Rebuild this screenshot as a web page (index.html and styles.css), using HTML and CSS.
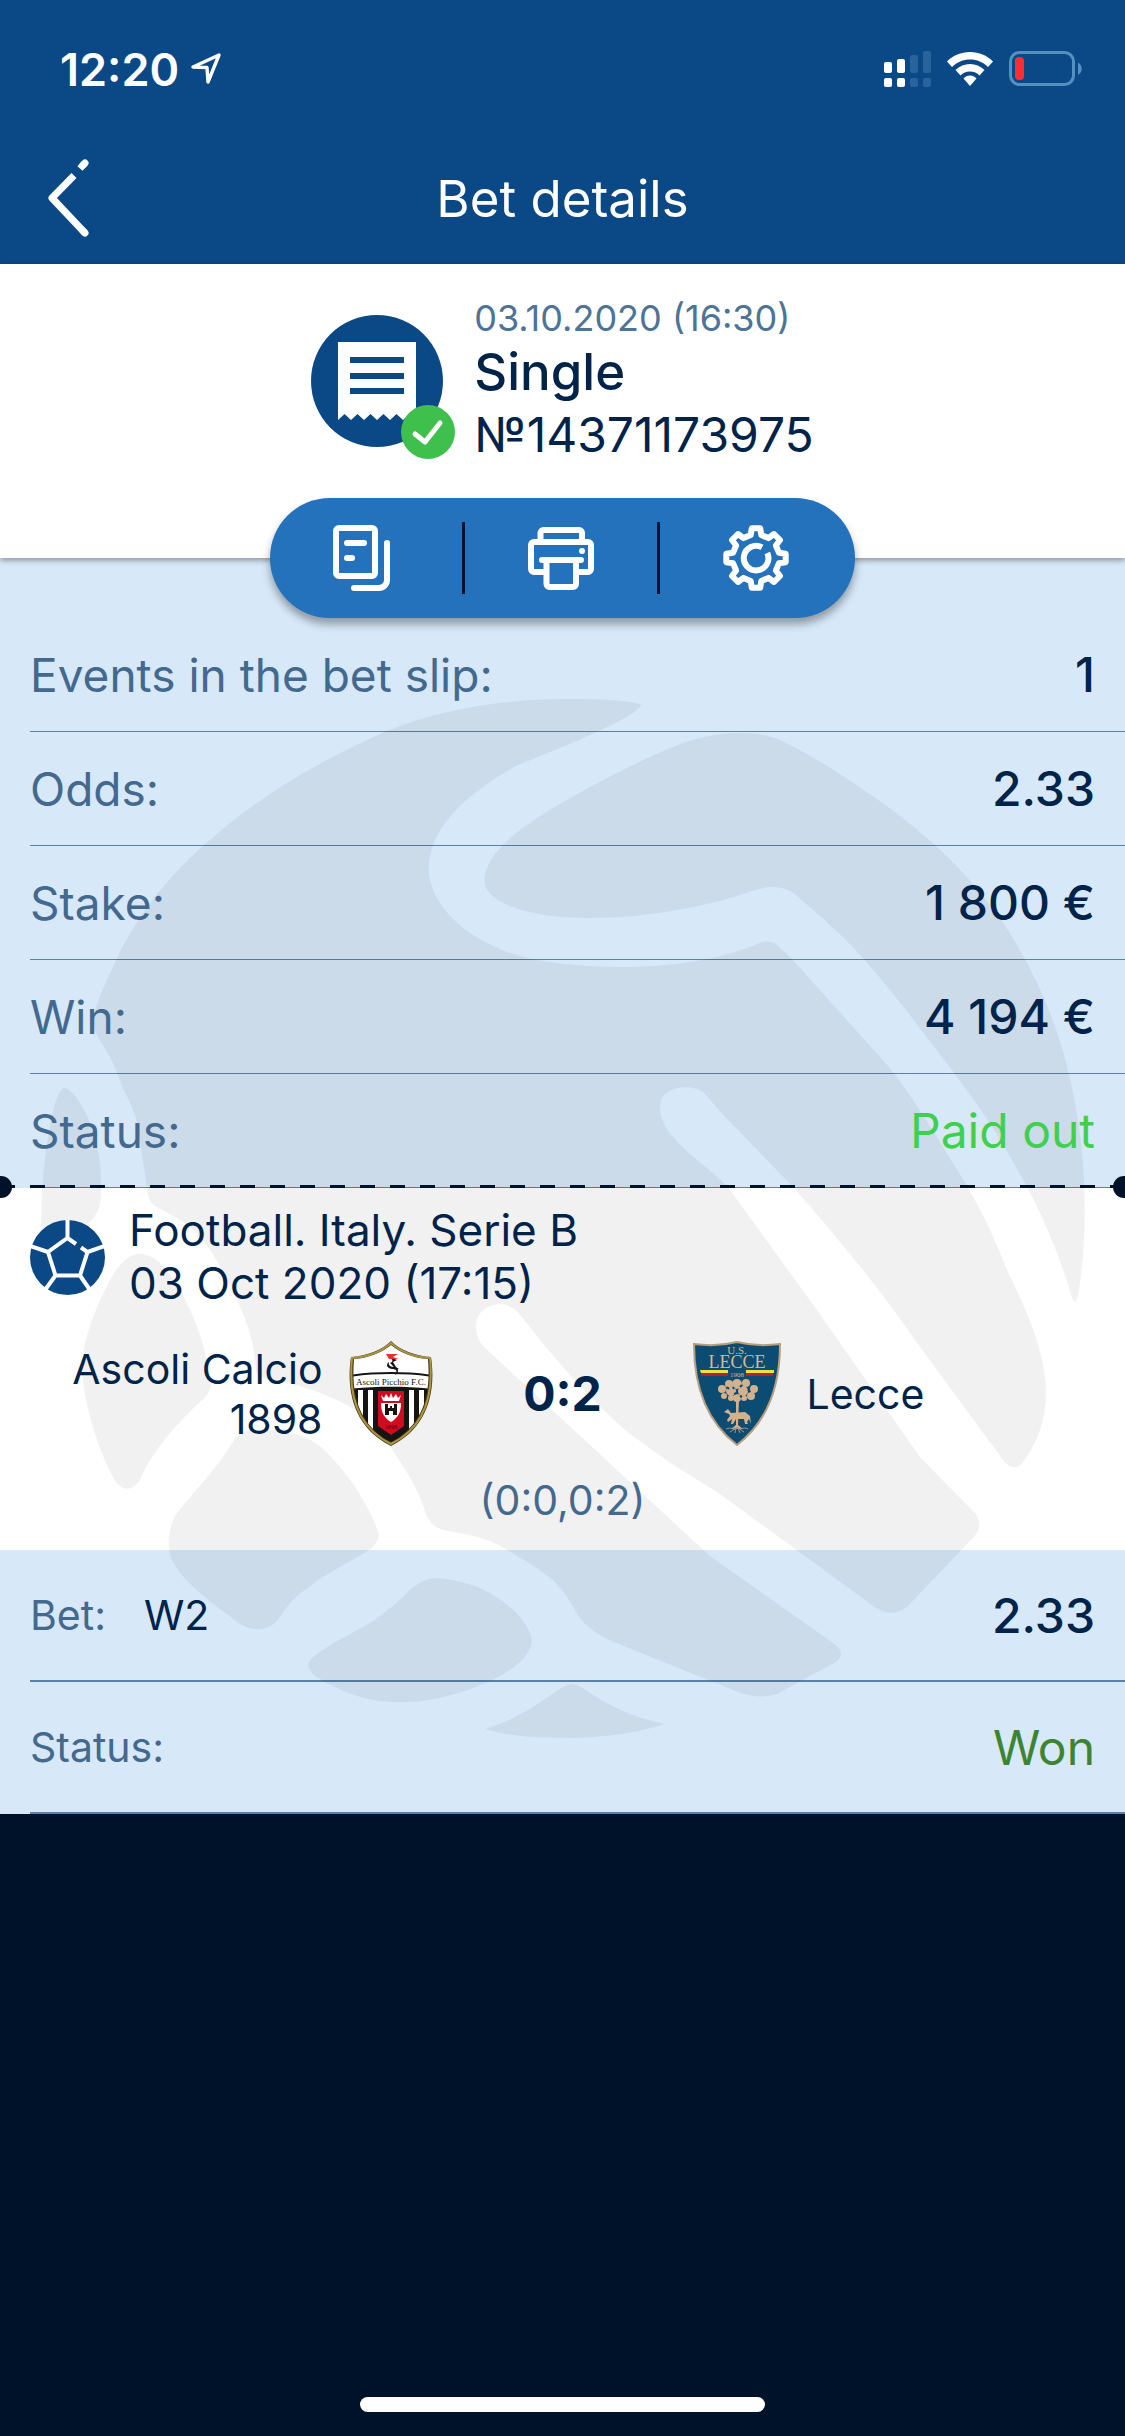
FILE: index.html
```html
<!DOCTYPE html>
<html lang="en">
<head>
    <meta charset="UTF-8">
    <meta name="viewport" content="width=device-width, initial-scale=1.0">
    <title>Bet details</title>
    <link rel="stylesheet" href="styles.css">
</head>
<body>
    <header class="header">
        <div class="status-bar">
            <div class="status-left">
                <span class="time">12:20</span>
                <svg class="location" width="30" height="32" viewBox="0 0 30 32">
                    <path d="M2 14 L28 2 L17 29 L16 14.5 Z" fill="none" stroke="#fff" stroke-width="3.4" stroke-linejoin="round"/>
                </svg>
            </div>
            <div class="status-right">
                <svg width="47" height="36" viewBox="0 0 47 36">
                    <g fill="#fff">
                        <rect x="0" y="11" width="8" height="11" rx="2"/>
                        <rect x="13" y="8" width="8" height="14" rx="2"/>
                        <rect x="0" y="27" width="8" height="9" rx="2"/>
                        <rect x="13" y="27" width="8" height="9" rx="2"/>
                    </g>
                    <g fill="#28649b">
                        <rect x="26" y="4" width="8" height="18" rx="2"/>
                        <rect x="39" y="0" width="8" height="22" rx="2"/>
                        <rect x="26" y="27" width="8" height="9" rx="2"/>
                        <rect x="39" y="27" width="8" height="9" rx="2"/>
                    </g>
                </svg>
                <svg width="46" height="34" viewBox="0 0 46 34">
                    <path d="M23 0 C32 0 40 3.500 46 9.500 L41 15 C36 10 30 7.500 23 7.500 C16 7.500 10 10 5 15 L0 9.500 C6 3.500 14 0 23 0 Z" fill="#fff"/>
                    <path d="M23 12 C28.500 12 33.500 14 37.500 18 L32.500 23.500 C30 21 27 19.500 23 19.500 C19 19.500 16 21 13.500 23.500 L8.500 18 C12.500 14 17.500 12 23 12 Z" fill="#fff"/>
                    <path d="M23 23.500 C25.500 23.500 27.800 24.500 29.500 26.500 L23 34 L16.500 26.500 C18.200 24.500 20.500 23.500 23 23.500 Z" fill="#fff"/>
                </svg>
                <svg width="73" height="36" viewBox="0 0 73 36">
                    <rect x="1.500" y="1.500" width="63" height="32" rx="9" fill="none" stroke="#5590c0" stroke-width="3"/>
                    <rect x="6" y="6" width="9" height="23" rx="4" fill="#ff2d2f"/>
                    <path d="M69 11.500 C74 14 74 21.500 69 24 Z" fill="#5590c0"/>
                </svg>
            </div>
        </div>
        <div class="nav-bar">
            <button class="back-btn" aria-label="Back">
                <svg width="42" height="78" viewBox="0 0 42 78">
                    <path d="M37 4 L32 9.500 M26 16.500 L4 39 L37 74" fill="none" stroke="#fff" stroke-width="7" stroke-linejoin="round"/>
                    <path d="M37 4 L35 6 M37 74 L35 72" stroke="#fff" stroke-width="7" stroke-linecap="round"/>
                </svg>
            </button>
            <h1 class="title">Bet details</h1>
        </div>
    </header>

    <section class="summary">
        <div class="receipt">
            <svg width="132" height="132" viewBox="0 0 132 132">
                <circle cx="66" cy="66" r="66" fill="#0b4886"/>
                <path d="M27 27 H105 V105 L98.500 99 L92 105 L85.500 99 L79 105 L72.500 99 L66 105 L59.500 99 L53 105 L46.500 99 L40 105 L33.500 99 L27 105 Z" fill="#fff"/>
                <path d="M39 45 H93 M39 61 H93 M39 76 H93" stroke="#0b4886" stroke-width="6"/>
            </svg>
            <svg class="badge" width="54" height="54" viewBox="0 0 54 54">
                <circle cx="27" cy="27" r="27" fill="#3fbf4c"/>
                <path d="M14 29 L24 37 L39 18" fill="none" stroke="#fff" stroke-width="5" stroke-linecap="round" stroke-linejoin="round"/>
            </svg>
        </div>
        <div class="summary-text">
            <div class="date">03.10.2020 (16:30)</div>
            <div class="type">Single</div>
            <div class="number">№14371173975</div>
        </div>
    </section>

    <main class="slip">
        <!-- company mark behind the rows -->
        <svg class="watermark" viewBox="0 558 1125 1256" preserveAspectRatio="none" aria-hidden="true">
            <path d="M642 705 C630 700 600 699 567 699 C500 699 440 710 387 731 C320 760 260 795 204 845 C165 880 138 915 118 956 C105 985 97 1000 93 1019 C93 1028 97 1035 100 1041 C110 1055 117 1070 122 1087 C132 1105 138 1120 140 1140 L147 1188 C148 1198 150 1204 157 1207 L178 1219 C195 1228 208 1245 218 1263 C235 1293 250 1325 254 1352 L256 1370 C257 1376 262 1378 268 1379 C300 1384 330 1395 352 1408 C368 1417 376 1428 383 1437 C400 1460 415 1483 424 1508 C428 1522 434 1528 444 1530 C465 1534 485 1537 502 1547 C530 1563 550 1575 560 1588 C575 1605 575 1617 590 1628 C602 1638 615 1642 631 1649 L738 1692 C752 1697 764 1698 777 1694 L836 1662 C842 1657 843 1651 836 1645 L710 1556 L482 1345 C472 1330 474 1313 490 1306 C503 1302 512 1305 520 1315 C540 1340 575 1385 624 1429 C650 1450 680 1470 717 1492 L876 1608 C888 1615 897 1614 907 1607 L970 1541 C979 1532 982 1526 976 1514 L920 1457 L812 1303 L728 1187 C710 1168 688 1155 674 1138 C662 1125 658 1111 661 1100 C668 1086 691 1084 703 1092 C715 1105 725 1118 740 1132 C755 1148 773 1166 793 1187 C840 1240 885 1296 920 1347 L1003 1460 C1010 1469 1017 1470 1023 1462 C1038 1442 1046 1419 1046 1393 C1046 1360 1034 1325 1007 1270 C990 1226 972 1192 951 1160 C930 1125 910 1094 889 1067 L793 960 L776 944 Q768 939 757 944 C720 960 670 967 618 967 C580 967 530 962 502 950 C455 930 429 899 429 869 C429 830 460 798 516 766 C550 752 605 731 633 713 Z"/>
            <path d="M739 733 C700 733 668 748 631 766 C590 786 535 816 510 838 C490 856 482 873 485 885 C490 905 535 918 588 918 C650 918 710 906 755 890 C775 884 788 888 797 896 C818 914 842 935 861 956 C888 986 910 1015 925 1035 C960 1080 990 1120 1012 1160 C1035 1200 1055 1240 1072 1298 Q1076 1308 1079 1290 C1087 1240 1086 1180 1080 1134 C1070 1060 1050 995 1004 924 C960 860 910 820 846 778 C825 764 805 752 782 741 C770 735 755 733 739 733 Z"/>
            <path d="M65 1088 C61 1088 57 1096 54 1106 C45 1145 41 1190 41 1225 Q44 1260 55 1252 L90 1222 C99 1212 101 1206 101 1190 C102 1165 98 1145 91 1125 C84 1106 72 1089 65 1088 Z"/>
            <path d="M140 1254 C128 1254 118 1265 110 1280 C92 1314 82 1345 82 1370 C84 1405 98 1450 115 1481 Q128 1497 140 1480 C150 1455 175 1425 200 1402 C211 1392 212 1388 210 1378 C206 1344 190 1300 165 1268 Q152 1253 140 1254 Z"/>
            <path d="M268 1430 C250 1429 241 1430 234 1440 C220 1465 195 1490 177 1513 C169 1525 167 1540 170 1555 C178 1580 215 1605 240 1624 Q262 1636 277 1621 C285 1610 292 1598 308 1588 C325 1573 355 1560 372 1548 Q382 1539 377 1529 C369 1505 348 1472 321 1447 C308 1436 290 1431 268 1430 Z"/>
            <path d="M434 1578 Q424 1579 412 1588 C390 1610 375 1621 352 1633 C336 1642 320 1650 311 1659 Q304 1667 315 1676 C340 1692 370 1703 400 1702 C430 1703 463 1693 488 1682 C512 1671 530 1658 532 1641 C531 1625 512 1605 488 1592 C472 1583 452 1579 434 1578 Z"/>
            <path d="M572 1684 Q566 1684 552 1694 C535 1706 515 1720 485 1729 C510 1737 540 1738 567 1738 C605 1738 640 1732 665 1724 C640 1719 617 1710 595 1696 Q577 1683 572 1684 Z"/>
        </svg>

        <div class="actions">
            <button class="action-btn" aria-label="Copy">
                <svg width="57" height="66" viewBox="0 0 57 66" class="line-icon">
                    <rect x="3" y="3" width="39" height="48" rx="3"/>
                    <path d="M14 18 H31 M14 33 H19 M54 18 V55 A8 8 0 0 1 46 63 H21"/>
                </svg>
            </button>
            <button class="action-btn" aria-label="Print">
                <svg width="66" height="63" viewBox="0 0 66 63" class="line-icon">
                    <path d="M12.500 15 V6 A3 3 0 0 1 15.500 3 H51 A3 3 0 0 1 54 6 V15"/>
                    <path d="M16 45 H6 A3 3 0 0 1 3 42 V18 A3 3 0 0 1 6 15 H60 A3 3 0 0 1 63 18 V42 A3 3 0 0 1 60 45 H50"/>
                    <path d="M14 33 H53 M18.500 33 V57 A3 3 0 0 0 21.500 60 H45 A3 3 0 0 0 48 57 V33 M54 24 V24"/>
                </svg>
            </button>
            <button class="action-btn" aria-label="Settings">
                <svg width="66" height="66" viewBox="0 0 66 66" class="line-icon">
                    <path d="M28.800 3.300 H37.200 L38.300 10.100 L45.500 13.100 L51 9 L57 15 L52.900 20.500 L55.900 27.700 L62.700 28.800 V37.200 L55.900 38.300 L52.900 45.500 L57 51 L51 57 L45.500 52.900 L38.300 55.900 L37.200 62.700 H28.800 L27.700 55.900 L20.500 52.900 L15 57 L9 51 L13.100 45.500 L10.100 38.300 L3.300 37.200 V28.800 L10.100 27.700 L13.100 20.500 L9 15 L15 9 L20.500 13.100 L27.700 10.100 Z"/>
                    <path d="M44.300 28 A12.300 12.300 0 1 1 39 22.300" stroke-linecap="butt"/>
                </svg>
            </button>
        </div>

        <dl class="rows">
            <div class="row"><dt>Events in the bet slip:</dt><dd>1</dd></div>
            <div class="row"><dt>Odds:</dt><dd>2.33</dd></div>
            <div class="row"><dt>Stake:</dt><dd>1 800 €</dd></div>
            <div class="row"><dt>Win:</dt><dd>4 194 €</dd></div>
            <div class="row"><dt>Status:</dt><dd class="paid">Paid out</dd></div>
        </dl>
        <div class="tear-line"></div>

        <section class="match">
            <div class="league">
                <svg width="75" height="75" viewBox="0 0 75 75">
                    <circle cx="37.500" cy="37.500" r="37.500" fill="#0b4886"/>
                    <path d="M46 24 L37.500 18 L18 32 L25.500 55.500 H50 L57.500 32 L51 27.500 M37.500 18 V0 M57.500 32 L75 26 M50 55.500 L60 70 M25.500 55.500 L15 70 M18 32 L0 26" fill="none" stroke="#fff" stroke-width="4"/>
                </svg>
                <div>
                    <div>Football. Italy. Serie B</div>
                    <div>03 Oct 2020 (17:15)</div>
                </div>
            </div>
            <div class="teams">
                <div class="team home">
                    <span class="team-name">Ascoli Calcio 1898</span>
                    <svg width="84" height="105" viewBox="0 0 84 105">
                        <defs>
                            <clipPath id="ascoli"><path d="M42 4 C50 11 64 17 79 18 C82 52 75 84 42 101 C9 84 2 52 5 18 C20 17 34 11 42 4 Z"/></clipPath>
                        </defs>
                        <path d="M42 0 C51 9 66 15 82 16 C88 56 75 89 42 105 C9 89 -4 56 2 16 C18 15 33 9 42 0 Z" fill="#4a3d17"/>
                        <path d="M42 2 C51 10 65 16 81 17 C85 56 74 87 42 103 C10 87 -1 56 3 17 C19 16 33 10 42 2 Z" fill="none" stroke="#ac9440" stroke-width="2"/>
                        <g clip-path="url(#ascoli)">
                            <rect width="84" height="105" fill="#161412"/>
                            <path d="M0 0 H84 V34 C58 30 26 30 0 34 Z" fill="#fff"/>
                            <path d="M0 36 C26 32 58 32 84 36 V48 C58 45 26 45 0 48 Z" fill="#fff"/>
                            <path d="M9 49 h5 v50 h-5 z M19 49 h5 v50 h-5 z M60 49 h5 v50 h-5 z M70 49 h5 v50 h-5 z" fill="#fff"/>
                            <path d="M29 50 H55 V85 L42 94 L29 85 Z" fill="#d10a20"/>
                            <path d="M32 54 L35 57 L37 53 L40 57 L42 52 L44 57 L47 53 L49 57 L52 54 L50 60 H34 Z" fill="#fff"/>
                            <path d="M32 62 H52 C52 71 49 77 42 81 C35 77 32 71 32 62 Z" fill="#fff"/>
                            <path d="M36 63 h3 v4 h2 v-2 h2 v2 h2 v-4 h3 v11 h-4 v-4 h-4 v4 h-4 z" fill="#161412"/>
                            <text class="crest-text" x="42" y="88" font-size="6" fill="#4e0510">1898</text>
                        </g>
                        <path d="M41 16 L48 19 L44 21 L47 26 L50 28 C46 30 44 24 41 22 C46 20 42 18 41 16 M40 21 C39 25 42 26 46 26 C50 28 50 32 46 34 C49 30 47 28 43 28 C37 27 37 23 40 21 Z" fill="#161412"/>
                        <path d="M37 13 L49 13 L44 16 L50 18 L40 18 Z" fill="#e53034"/>
                        <text class="crest-text" x="42" y="44" font-size="9" fill="#111">Ascoli Picchio F.C.</text>
                    </svg>
                </div>
                <div class="score">0:2</div>
                <div class="team away">
                    <svg width="88" height="105" viewBox="0 0 88 105">
                        <path d="M1 3 C16 5 32 4 44 1 C56 4 72 5 87 3 C87 46 74 81 44 104 C14 81 1 46 1 3 Z" fill="#0c4c72" stroke="#b79f7d" stroke-width="2"/>
                        <g class="crest-text" fill="#d7b895">
                            <text x="44" y="13" font-size="11">U.S.</text>
                            <text x="44" y="27" font-size="18">LECCE</text>
                            <text x="44" y="36" font-size="7">1908</text>
                        </g>
                        <path d="M7 29 H35 V32 H8 Z M53 29 H81 V32 H53 Z" fill="#e5e63a"/>
                        <path d="M8 32 H35 V35 H9 Z M53 32 H80 V35 H53 Z" fill="#b51f35"/>
                        <g fill="#d2b18f">
                            <circle cx="44" cy="43" r="5"/><circle cx="36" cy="43" r="4"/><circle cx="53" cy="42" r="4"/>
                            <circle cx="29" cy="48" r="4"/><circle cx="61" cy="48" r="4"/><circle cx="38" cy="50" r="5"/>
                            <circle cx="50" cy="50" r="5"/><circle cx="31" cy="55" r="3"/><circle cx="58" cy="55" r="4"/>
                            <circle cx="44" cy="57" r="4"/><circle cx="38" cy="57" r="3"/><circle cx="51" cy="57" r="3"/>
                            <path d="M43 58 H46 L45 84 L50 88 H38 L43 84 Z"/>
                            <path d="M31 71 L35 68 L38 72 L52 71 L57 75 L58 83 L56 78 L54 81 L55 83 H52 L51 78 H43 L40 83 H38 L39 78 L35 81 L34 79 L37 75 L36 73 Z"/>
                        </g>
                        <path d="M33 88 C38 85 42 91 44 86 C46 91 50 85 55 88 M37 91 L43 87 L42 92 M51 91 L45 87 L47 92" fill="none" stroke="#a49480" stroke-width="1"/>
                        <path d="M34 46 l2 2 M47 46 l2 -2 M41 53 l3 -1 M55 49 l2 2 M47 55 l2 1 M40 46 l1 2" stroke="#0c4c72" stroke-width="2"/>
                    </svg>
                    <span class="team-name">Lecce</span>
                </div>
            </div>
            <div class="halves">(0:0,0:2)</div>
        </section>

        <dl class="rows bet-rows">
            <div class="row"><dt>Bet:</dt><dd class="pick">W2</dd><dd>2.33</dd></div>
            <div class="row"><dt>Status:</dt><dd class="won">Won</dd></div>
        </dl>
    </main>

    <div class="home-indicator"></div>
</body>
</html>
```
FILE: styles.css
```css
* {
    box-sizing: border-box;
}
body {
    margin: 0;
    min-height: 100vh;
    display: flex;
    flex-direction: column;
    font-family: 'Inter', 'Roboto', sans-serif;
    font-size: 48px;
    color: #00234a;
    background-color: #001229;
}
svg {
    display: block;
    flex: none;
}
button {
    padding: 0;
    border: none;
    background: none;
    cursor: pointer;
}
.header {
    background-color: #0b4886;
    color: #fff;
}
.status-bar {
    height: 132px;
    padding: 6px 43px 0 60px;
    display: flex;
    justify-content: space-between;
    align-items: center;
}
.status-left {
    display: flex;
    align-items: center;
    gap: 12px;
}
.status-right {
    display: flex;
    align-items: center;
    gap: 16px;
}
.time {
    font-size: 45px;
    font-weight: 600;
}
.nav-bar {
    height: 132px;
    padding: 0 48px;
    display: grid;
    grid-template-columns: 1fr auto 1fr;
    align-items: center;
}
.back-btn {
    justify-self: start;
}
.title {
    margin: 0;
    font-size: 51px;
    font-weight: 400;
}
.summary {
    position: relative;
    z-index: 1;
    padding: 30px 0 90px;
    display: flex;
    justify-content: center;
    align-items: center;
    gap: 31px;
    background-color: #fff;
    box-shadow: 0 2px 6px rgba(0, 0, 0, 0.4);
}
.receipt {
    position: relative;
}
.badge {
    position: absolute;
    right: -12px;
    bottom: -12px;
}
.date {
    font-size: 36px;
    line-height: 48px;
    color: #4d7396;
}
.type {
    font-size: 51px;
    line-height: 60px;
    font-weight: 500;
}
.number {
    font-size: 48px;
    line-height: 66px;
}
.slip {
    position: relative;
    overflow-x: clip;
    background-color: #d7e8f8;
}
.watermark {
    position: absolute;
    top: 0;
    left: 0;
    width: 100%;
    height: 100%;
    fill: rgba(0, 0, 0, 0.055);
    pointer-events: none;
}
.actions {
    position: relative;
    z-index: 1;
    width: 52%;
    height: 120px;
    margin: -60px auto 0;
    display: grid;
    grid-template-columns: repeat(3, 1fr);
    align-items: center;
    background-color: #2472bb;
    border-radius: 60px;
    box-shadow: 0 6px 9px rgba(0, 0, 0, 0.35);
}
.action-btn {
    height: 72px;
    padding-left: 63px;
    display: flex;
    align-items: center;
}
.action-btn:not(:last-child) {
    border-right: 3px solid #001229;
}
.line-icon {
    fill: none;
    stroke: #fff;
    stroke-width: 6px;
    stroke-linecap: round;
    stroke-linejoin: round;
}
.rows {
    margin: 0;
    padding-left: 30px;
}
.row {
    height: 114px;
    padding-right: 30px;
    display: flex;
    align-items: center;
    border-bottom: 1px solid #5c80a8;
}
.row dt {
    position: relative;
    font-size: 46px;
    color: #44698f;
}
.row dd {
    position: relative;
    margin: 0 0 0 auto;
    font-weight: 500;
}
.row .paid {
    font-weight: 400;
    color: #3fd04e;
}
.tear-line {
    position: relative;
    height: 3px;
    margin-top: -3px;
    background: repeating-linear-gradient(90deg, #001229 0 15px, transparent 15px 30px);
}
.tear-line::before,
.tear-line::after {
    content: '';
    position: absolute;
    top: -9px;
    left: -10px;
    width: 22px;
    height: 22px;
    border-radius: 50%;
    background-color: #001229;
}
.tear-line::after {
    left: auto;
    right: -10px;
}
.match {
    padding: 16px 0 20px;
    background-color: #fff;
}
.league {
    position: relative;
    z-index: 1;
    padding: 0 30px;
    display: flex;
    align-items: center;
    gap: 24px;
    font-size: 44px;
    line-height: 53px;
}
.teams {
    position: relative;
    z-index: 1;
    margin: 31px 0 24px;
    display: grid;
    grid-template-columns: 1fr 260px 1fr;
    align-items: center;
}
.team {
    display: flex;
    align-items: center;
    gap: 26px;
    padding: 0 30px;
    font-size: 41px;
    line-height: 50px;
}
.home {
    justify-content: flex-end;
    padding-right: 0;
    text-align: right;
}
.away {
    padding-left: 0;
}
.score {
    font-weight: 700;
    text-align: center;
}
.crest-text {
    font-family: 'Liberation Serif', serif;
    text-anchor: middle;
}
.halves {
    position: relative;
    z-index: 1;
    font-size: 41px;
    line-height: 60px;
    text-align: center;
    color: #44698f;
}
.bet-rows .row {
    height: 132px;
    border-bottom-width: 2px;
}
.bet-rows dt {
    font-size: 41px;
}
.bet-rows .pick {
    margin-left: 38px;
    font-size: 41px;
    font-weight: 400;
}
.row .won {
    font-weight: 400;
    color: #3c8432;
}
.home-indicator {
    width: 36%;
    height: 15px;
    margin: auto auto 24px;
    border-radius: 8px;
    background-color: #fff;
}
```
